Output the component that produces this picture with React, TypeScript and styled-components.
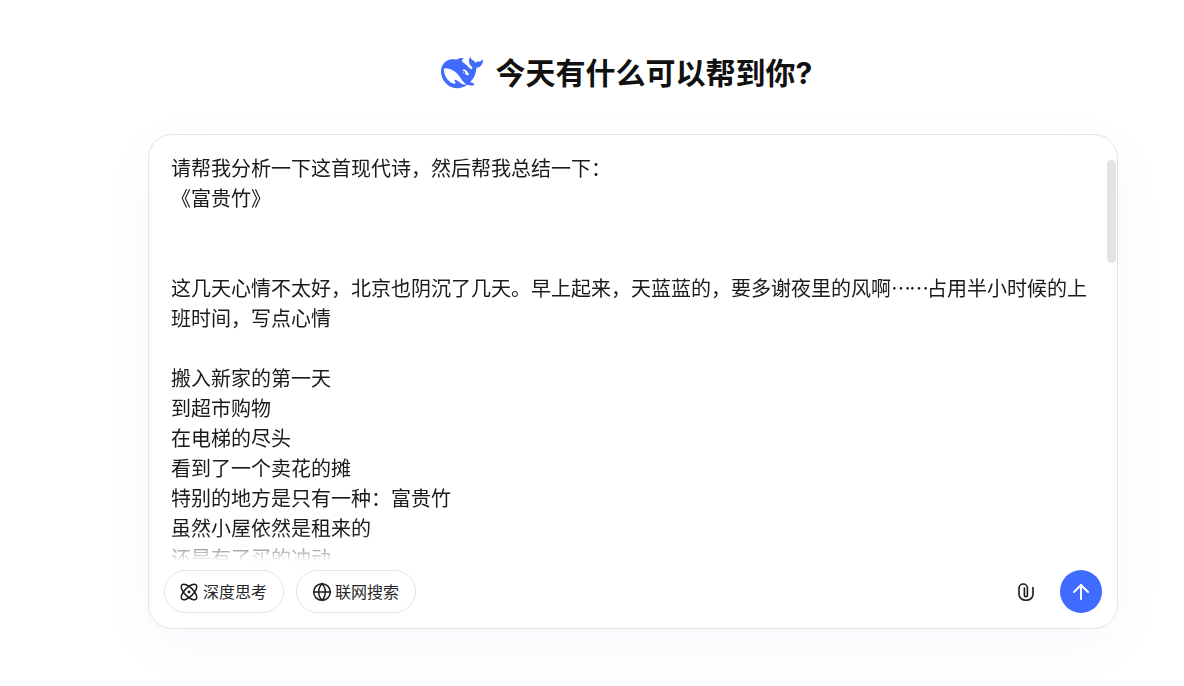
import React from 'react';
import styled, { createGlobalStyle } from 'styled-components';
import { ArrowUp, Globe } from 'lucide-react';

const GlobalStyle = createGlobalStyle`
    html, body {
        margin: 0;
        height: 100%;
        background-color: #ffffff;
        overflow: hidden;
        font-family: 'Noto Sans CJK SC', 'Inter', sans-serif;
    }
`;

const Page = styled.div`
    height: 686px;
    box-sizing: border-box;
    padding: 52px 66px 0 148px;
    display: flex;
    flex-direction: column;
`;
const Header = styled.div`
    height: 42px;
    padding-right: 13px;
    display: flex;
    align-items: center;
    justify-content: center;
    gap: 13px;
    margin-bottom: 40px;
`;
const Title = styled.h1`
    margin: 0;
    font-family: 'Inter', 'Noto Sans CJK SC', sans-serif;
    font-size: 30px;
    line-height: 42px;
    font-weight: 700;
    color: #111111;
`;
const Card = styled.div`
    position: relative;
    height: 495px;
    box-sizing: border-box;
    background-color: #ffffff;
    border: 1px solid #e4e4e7;
    border-radius: 24px;
    box-shadow: 0 16px 56px rgba(70, 100, 220, 0.045);
    display: flex;
    flex-direction: column;
`;
const Content = styled.div`
    height: 408px;
    margin: 18px 24px 0 22px;
    overflow: hidden;
    font-size: 20px;
    line-height: 30px;
    color: #1a1a1a;
    mask-image: linear-gradient(to bottom, #000 calc(100% - 28px), transparent 100%);
`;
const Line = styled.div`
    min-height: 30px;
    white-space: pre-wrap;
`;
const Ellipsis = styled.span`
    letter-spacing: -2px;
`;
const ScrollThumb = styled.div`
    position: absolute;
    top: 25px;
    right: 1px;
    width: 9px;
    height: 103px;
    border-radius: 5px;
    background-color: #e3e3e3;
`;
const Toolbar = styled.div`
    margin-top: auto;
    padding: 0 15px 15px 15px;
    display: flex;
    align-items: center;
    gap: 12px;
`;
const Pill = styled.button`
    width: 120px;
    height: 43px;
    box-sizing: border-box;
    padding: 0 0 2px 15px;
    background-color: #ffffff;
    border: 1px solid #e4e4e7;
    border-radius: 22px;
    display: flex;
    align-items: center;
    gap: 5px;
    font-family: inherit;
    font-size: 16px;
    color: #26262a;
    cursor: pointer;
    svg {
        flex-shrink: 0;
        position: relative;
        top: 1px;
    }
`;
const GlobeIcon = styled(Globe)`
    margin-right: -2px;
`;
const Spacer = styled.div`
    flex: 1;
`;
const AttachButton = styled.button`
    width: 24px;
    height: 24px;
    margin-right: 10px;
    padding: 0;
    border: none;
    background: none;
    color: #1a1a1a;
    display: flex;
    align-items: center;
    justify-content: center;
    cursor: pointer;
`;
const SendButton = styled.button`
    width: 42px;
    height: 43px;
    padding: 0;
    border: none;
    border-radius: 50%;
    background-color: #3f6bff;
    color: #ffffff;
    display: flex;
    align-items: center;
    justify-content: center;
    cursor: pointer;
`;

const WhaleLogo = () => (
    <svg width="42" height="42" viewBox="0 0 24 24" fill="#416bff">
        <path d="M23.748 4.482c-.254-.124-.364.113-.512.234-.051.039-.094.09-.137.136-.372.397-.806.657-1.373.626-.829-.046-1.537.214-2.163.848-.133-.782-.575-1.248-1.247-1.548-.352-.156-.708-.311-.955-.65-.172-.241-.219-.51-.305-.774-.055-.16-.11-.323-.293-.35-.2-.031-.278.136-.356.276-.313.572-.434 1.202-.422 1.84.027 1.436.633 2.58 1.838 3.393.137.093.172.187.129.323-.082.28-.18.552-.266.833-.055.179-.137.217-.329.14a5.526 5.526 0 01-1.736-1.18c-.857-.828-1.631-1.742-2.597-2.458a11.365 11.365 0 00-.689-.471c-.985-.957.13-1.743.388-1.836.27-.098.093-.432-.779-.428-.872.004-1.67.295-2.687.684a3.055 3.055 0 01-.465.137 9.597 9.597 0 00-2.883-.102c-1.885.21-3.39 1.102-4.497 2.623C.082 8.606-.231 10.684.152 12.85c.403 2.284 1.569 4.175 3.36 5.653 1.858 1.533 3.997 2.284 6.438 2.14 1.482-.085 3.133-.284 4.994-1.86.47.234.962.327 1.78.397.63.059 1.236-.03 1.705-.128.735-.156.684-.837.419-.961-2.155-1.004-1.682-.595-2.113-.926 1.096-1.296 2.746-2.642 3.392-7.003.05-.347.007-.565 0-.845-.004-.17.035-.237.23-.256a4.173 4.173 0 001.545-.475c1.396-.763 1.96-2.015 2.093-3.517.02-.23-.004-.467-.247-.588zM11.581 18c-2.089-1.642-3.102-2.183-3.52-2.16-.392.024-.321.471-.235.763.09.288.207.486.371.739.114.167.192.416-.113.603-.673.416-1.842-.14-1.897-.167-1.361-.802-2.5-1.86-3.301-3.307-.774-1.393-1.224-2.887-1.298-4.482-.02-.386.093-.522.477-.592a4.696 4.696 0 011.529-.039c2.132.312 3.946 1.265 5.468 2.774.868.86 1.525 1.887 2.202 2.891.72 1.066 1.494 2.082 2.48 2.914.348.292.625.514.891.677-.802.09-2.14.11-3.054-.614zm1-6.44a.306.306 0 01.415-.287.302.302 0 01.2.288.306.306 0 01-.31.307.303.303 0 01-.304-.308zm3.11 1.596c-.2.081-.399.151-.59.16a1.245 1.245 0 01-.798-.254c-.274-.23-.47-.358-.552-.758a1.73 1.73 0 01.016-.588c.07-.327-.008-.537-.239-.727-.187-.156-.426-.199-.688-.199a.559.559 0 01-.254-.078c-.11-.054-.2-.19-.114-.358.028-.054.16-.186.192-.21.356-.202.767-.136 1.146.016.352.144.618.408 1.001.782.391.451.462.576.685.914.176.265.336.537.445.848.067.195-.019.354-.25.452z" />
    </svg>
);

const AtomIcon = () => (
    <svg width="18" height="18" viewBox="0 0 18 18" fill="none" stroke="#1a1a1a" strokeWidth="1.5">
        <ellipse cx="9" cy="9" rx="10" ry="4.4" transform="rotate(45 9 9)" />
        <ellipse cx="9" cy="9" rx="10" ry="4.4" transform="rotate(-45 9 9)" />
        <circle cx="9" cy="9" r="1.4" fill="#1a1a1a" stroke="none" />
    </svg>
);

const ClipIcon = () => (
    <svg width="16" height="18" viewBox="0 0 16 18" fill="none" stroke="#1a1a1a" strokeWidth="1.6" strokeLinecap="round">
        <path d="M15 4.5V11.500a7 5.700 0 0 1-14 0V5.200a4.200 4.200 0 0 1 8.400 0v7a1.500 1.500 0 0 1-3 0V5" />
    </svg>
);

const lines: React.ReactNode[] = [
    '请帮我分析一下这首现代诗，然后帮我总结一下：',
    '《富贵竹》',
    '',
    '',
    <>
        这几天心情不太好，北京也阴沉了几天。早上起来，天蓝蓝的，要多谢夜里的风啊<Ellipsis>……</Ellipsis>占用半小时候的上班时间，写点心情
    </>,
    '',
    '搬入新家的第一天',
    '到超市购物',
    '在电梯的尽头',
    '看到了一个卖花的摊',
    '特别的地方是只有一种：富贵竹',
    '虽然小屋依然是租来的',
    '还是有了买的冲动',
];

function App() {
    return (
        <>
            <GlobalStyle />
            <Page>
                <Header>
                    <WhaleLogo />
                    <Title>今天有什么可以帮到你?</Title>
                </Header>
                <Card>
                    <Content>
                        {lines.map((line, i) => (
                            <Line key={i}>{line}</Line>
                        ))}
                    </Content>
                    <ScrollThumb />
                    <Toolbar>
                        <Pill>
                            <AtomIcon />
                            深度思考
                        </Pill>
                        <Pill>
                            <GlobeIcon size={20} strokeWidth={1.8} color="#1a1a1a" />
                            联网搜索
                        </Pill>
                        <Spacer />
                        <AttachButton>
                            <ClipIcon />
                        </AttachButton>
                        <SendButton>
                            <ArrowUp size={24} strokeWidth={2} />
                        </SendButton>
                    </Toolbar>
                </Card>
            </Page>
        </>
    );
}

export default App;
